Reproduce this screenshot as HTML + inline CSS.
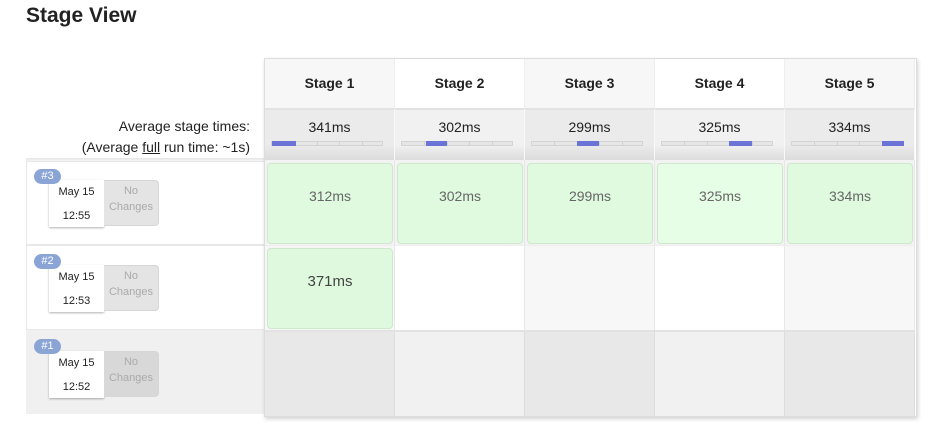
<!DOCTYPE html>
<html><head><meta charset="utf-8"><style>
*{margin:0;padding:0;box-sizing:border-box}
body{width:939px;height:435px;background:#fff;font-family:"Liberation Sans","DejaVu Sans",sans-serif;color:#333;position:relative;overflow:hidden}
.a{position:absolute}
h1{position:absolute;left:26px;top:4px;font-size:21px;font-weight:bold;color:#222}
.c{text-align:center}
.hd{font-weight:bold;font-size:14px;color:#222;line-height:48px}
.avg{font-size:14px;color:#222}
.bar{position:absolute;left:6px;top:31px;width:112px;height:5px;background:#e6e6e6;border:1px solid #d4d4d4}
.seg{position:absolute;top:-1px;height:5px;background:#6b73d6}
.tick{position:absolute;top:0;width:1px;height:3px;background:#d0d0d0}
.g{position:absolute;border:1px solid #cfe6cf;border-radius:4px;background:#dffadf;font-size:14px;color:#666;text-align:center}
.badge{position:absolute;background:#8aa4d6;color:#fff;font-size:11px;border-radius:8px;width:27px;height:15px;line-height:15px;text-align:center}
.date{position:absolute;width:55px;height:47px;background:#fff;box-shadow:0 1px 2px rgba(0,0,0,.3);font-size:11px;color:#222;text-align:center;line-height:24px;padding-top:0}
.nc{position:absolute;width:55px;height:46px;border-radius:0 4px 4px 0;border:1px solid #d6d6d6;border-left:none;font-size:11px;color:#aaa;text-align:center;line-height:16px;padding-top:2px}
</style></head><body>
<h1>Stage View</h1>

<div class="a" style="left:60px;top:116px;width:190px;text-align:right;font-size:14px;color:#222;line-height:21px">Average stage times:<br>(Average <u>full</u> run time: ~1s)</div>
<div class="a" style="left:26px;top:158px;width:239px;height:3px;background:linear-gradient(#e4e4e4,#f5f5f5)"></div>

<div class="a" style="left:26px;top:161px;width:239px;height:84px;border:1px solid #e8e8e8;border-right:none;background:#fff"></div>
<div class="a" style="left:26px;top:245px;width:239px;height:85px;border:1px solid #e8e8e8;border-right:none;background:#fff"></div>
<div class="a" style="left:26px;top:330px;width:239px;height:84px;background:#f0f0f0"></div>

<div class="date" style="left:49px;top:180px">May 15<br>12:55</div>
<div class="nc" style="left:104px;top:180px;background:#e4e4e4">No<br>Changes</div>
<div class="badge" style="left:34px;top:169px">#3</div>

<div class="date" style="left:49px;top:265px">May 15<br>12:53</div>
<div class="nc" style="left:104px;top:265px;background:#e4e4e4">No<br>Changes</div>
<div class="badge" style="left:34px;top:254px">#2</div>

<div class="date" style="left:49px;top:351px">May 15<br>12:52</div>
<div class="nc" style="left:104px;top:351px;background:#d8d8d8">No<br>Changes</div>
<div class="badge" style="left:34px;top:339px">#1</div>

<div class="a" style="left:264px;top:58px;width:653px;height:359px;border:1px solid #ddd;box-shadow:1px 2px 4px rgba(0,0,0,.18);background:#fff"></div>

<div id="cols"></div>
<script>
var names=["Stage 1","Stage 2","Stage 3","Stage 4","Stage 5"];
var avgs=["341ms","302ms","299ms","325ms","334ms"];
var segs=[[0,24],[24,45],[45,67],[67,90],[90,112]];
var r3=["312ms","302ms","299ms","325ms","334ms"];
var h="";
for(var i=0;i<5;i++){
 var x=265+i*130, odd=i%2==0;
 h+='<div class="a c hd" style="left:'+x+'px;top:59px;width:130px;height:49px;background:'+(odd?'#f7f7f7':'#fff')+';border-right:1px solid #eee">'+names[i]+'</div>';
 h+='<div class="a c avg" style="left:'+x+'px;top:108px;width:130px;height:52px;background:linear-gradient('+(odd?'#ebebeb':'#f1f1f1')+' 70%,#dcdcdc);border-top:2px solid #e2e2e2;border-right:1px solid #f8f8f8;padding-top:9px">'+avgs[i];
 h+='<div class="bar">';
 for(var t=1;t<5;t++)h+='<div class="tick" style="left:'+(t*22.4)+'px"></div>';
 h+='<div class="seg" style="left:'+segs[i][0]+'px;width:'+(segs[i][1]-segs[i][0])+'px"></div></div></div>';
 h+='<div class="a" style="left:'+x+'px;top:160px;width:130px;height:85px;background:#f3f3f3;border-right:1px solid #e8e8e8"></div>';
 h+='<div class="g" style="left:'+(x+2)+'px;top:163px;width:126px;height:81px;line-height:64px;'+(i==3?'background:#e6fde6':'')+'">'+r3[i]+'</div>';
 h+='<div class="a" style="left:'+x+'px;top:245px;width:130px;height:85px;background:'+(odd?'#f7f7f7':'#fff')+';border-right:1px solid #e8e8e8;border-top:1px solid #eee"></div>';
 h+='<div class="a" style="left:'+x+'px;top:330px;width:130px;height:86px;background:'+(odd?'#e8e8e8':'#f1f1f1')+';border-right:1px solid #ddd;border-top:2px solid #e2e2e2"></div>';
}
h+='<div class="g" style="left:267px;top:248px;width:126px;height:81px;line-height:66px;font-size:15px;color:#444;background:#dff9df">371ms</div>';
document.getElementById("cols").innerHTML=h;
</script>
</body></html>
